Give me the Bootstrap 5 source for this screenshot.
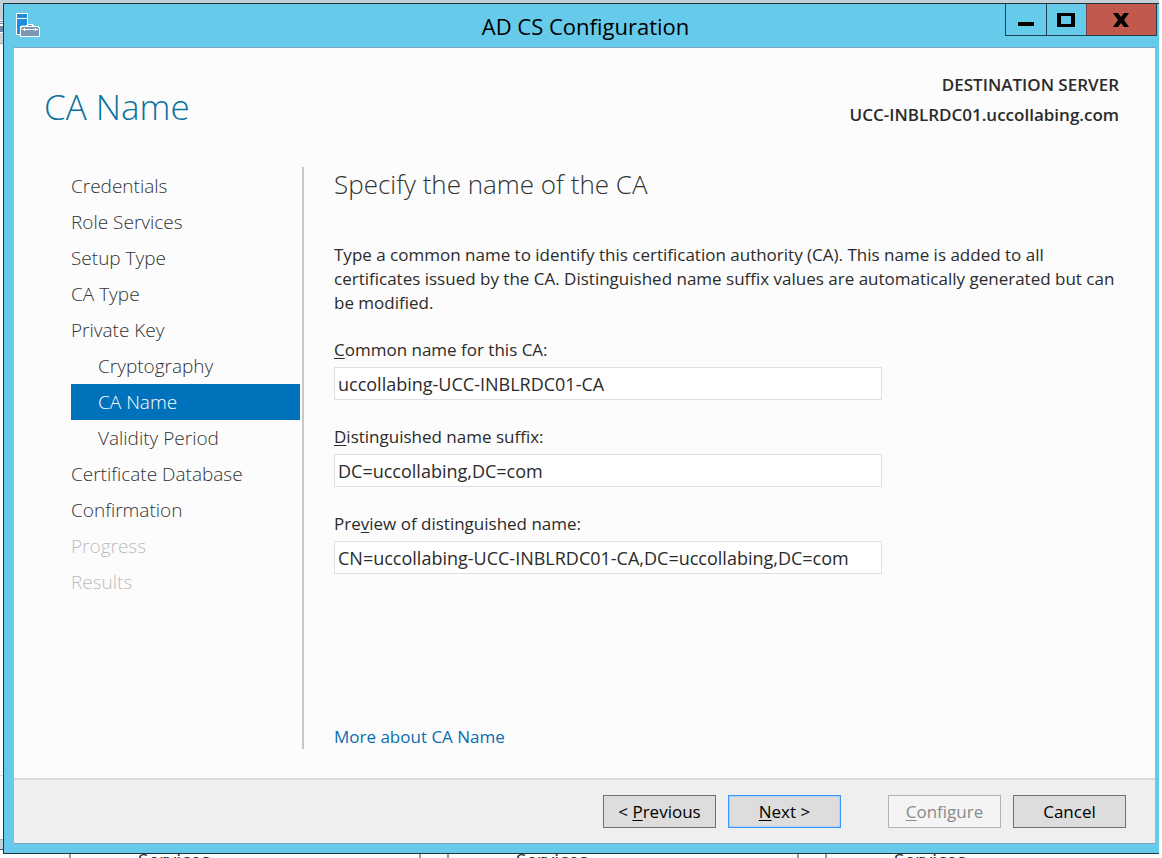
<!DOCTYPE html>
<html lang="en">
<head>
<meta charset="utf-8">
<meta name="viewport" content="width=device-width, initial-scale=1">
<title>AD CS Configuration</title>
<link href="https://cdn.jsdelivr.net/npm/bootstrap@5.3.0/dist/css/bootstrap.min.css" rel="stylesheet">
<style>
  body { font-family: "Open Sans", "Noto Sans", sans-serif; font-size: 17px; line-height: 24px; color: #2b2b2b; background: #fff; }
  .desk { background: linear-gradient(#c3d0d8 0 20px, #fff 20px 21px, #7086a4 21px 22px, #fff 22px 23px, #7086a4 23px 24px, #fff 24px 26px, #7086a4 26px 32px, #fff 32px 33px, #ccd2d6 33px 43px, #a8a8a8 43px 44px, #fcfcfc 44px 775px, #dcdcdc 775px 776px, #fcfcfc 776px 839px, #a0b0b8 839px 840px, #c0d4da 840px 849px, #506068 849px 850px, #fcfcfc 850px) 0 0 / calc(100% - 3px) 100% no-repeat; padding: 3px 3px 0; }
  .wizard { border: 1px solid #20343f; border-right: 0; background: #66caea; padding: 0 4px 9px 10px; }
  .titlebar { height: 43px; margin-right: -4px; }
  .titlebar h1 { font-size: 22px; line-height: 28px; color: #000; padding-top: 8px; }
  .app-icon { width: 24px; height: 24px; margin: 9px 0 0 2px; }
  .side { width: 152px; }
  .caption { border: 1px solid #20404c; border-top: 0; margin-right: 2px; height: 32px; }
  .caption button { border: 0; border-radius: 0; padding: 0; background: transparent; border-left: 1px solid #20404c; width: 40px; display: flex; align-items: center; justify-content: center; }
  .caption button:first-child { border-left: 0; }
  .caption button.shut { background: #c1594f; width: 70px; border-color: #7a4243; }
  .pane { background: #fcfcfc; border-top: 1px solid #7fa5bd; border-bottom: 1px solid #7fa5bd; }
  .page-head { padding: 20px 36px 0 30px; height: 119px; }
  .page-head h2 { font-size: 35px; line-height: 48px; font-weight: 300; color: #0a739e; padding-top: 15px; }
  .dest { font-weight: 600; line-height: 30px; padding-top: 2px; }
  .work { margin-bottom: 29px; }
  .steps { width: 233px; margin-left: 57px; border-right: 2px solid #c8c8c8; padding: 1px 2px 0 0; }
  .steps a { display: block; height: 36px; line-height: 36px; font-size: 19px; font-weight: 300; color: #333; text-decoration: none; }
  .steps .sub { padding-left: 27px; }
  .steps .current { background: #0072bc; color: #fff; }
  .steps .off { color: #bdbdbd; }
  .form-side { padding: 0 36px 0 30px; }
  .form-side h3 { font-size: 26px; line-height: 34px; font-weight: 300; color: #333; margin-bottom: 42px; }
  .intro { margin-bottom: 23px; }
  .field { width: 548px; max-width: 100%; margin-bottom: 25px; }
  .field label { display: block; margin-bottom: 5px; }
  .field .form-control { height: 33px; border: 1px solid #dfdfe8; border-radius: 0; padding: 0 3px; font-size: 18px; color: #2b2b2b; background: #fff; }
  .more { color: #0b6cb0; text-decoration: none; }
  .foot { background: #efefef; border-top: 2px solid #dadada; height: 65px; padding: 15px 29px 0; gap: 12px; }
  .foot .btn { width: 113px; height: 33px; border-radius: 0; padding: 0; font-size: 17px; color: #000; background: #ddd; border: 1px solid #707070; transition: none; }
  .foot .btn-next, .foot .btn-next:hover { border: 1px solid #3399ff; box-shadow: inset 0 0 0 1px #b4d2f0; margin-right: 35px; }
  .foot .btn:disabled { color: #8a8a8a; background: #f4f4f4; border-color: #b0b4b4; opacity: 1; }
  .behind { height: 4px; padding-left: 66px; gap: 26px; }
  .tile { width: 352px; flex: none; border: 2px solid #999; border-width: 0 2px; padding-left: 67px; font-size: 19px; line-height: 12px; }
  u { text-underline-offset: 2px; }
</style>
</head>
<body>
<div class="desk vh-100 d-flex flex-column overflow-hidden">
  <main class="wizard flex-grow-1 d-flex flex-column">
    <header class="titlebar d-flex justify-content-between">
      <div class="side">
        <svg class="app-icon d-block" viewBox="0 0 24 24" shape-rendering="crispEdges" aria-hidden="true">
          <path fill="#fff" d="M0 0h12v12H5v10H0z"/>
          <path fill="#1f8ddb" d="M1 1h10v4H1zM1 6h10v6H5v1H4v8H1z"/>
          <path fill="#fff" d="M11 11h6v1h1v1h5v1h1v10H4V14h1v-1h5v-1h1z"/>
          <path fill="#7b97b2" d="M12 12h4v1h-4zM6 14h16v1h1v8H5v-8h1z"/>
          <path fill="#fff" d="M6 16h16v1H6zM8 15h1v3H8zM19 15h1v3h-1z"/>
        </svg>
      </div>
      <h1 class="mb-0 fw-normal">AD CS Configuration</h1>
      <div class="caption d-flex">
        <button type="button" aria-label="Minimize"><svg width="16" height="14" viewBox="0 0 16 14"><path d="M0 9h16v4H0z"/></svg></button>
        <button type="button" aria-label="Maximize"><svg width="18" height="14" viewBox="0 0 18 14"><path fill-rule="evenodd" d="M0 0h18v14H0zM4 3v8h10V3z"/></svg></button>
        <button type="button" class="shut" aria-label="Close"><svg width="16" height="14" viewBox="0 0 16 14"><path d="M0 0h5l3 4 3-4h5l-5 7 5 7h-5l-3-4-3 4H0l5-7z"/></svg></button>
      </div>
    </header>

    <section class="pane flex-grow-1 d-flex flex-column">
      <div class="page-head d-flex justify-content-between">
        <h2 class="mb-0">CA Name</h2>
        <div class="dest text-end">DESTINATION SERVER<br>UCC-INBLRDC01.uccollabing.com</div>
      </div>

      <div class="work flex-grow-1 d-flex">
        <nav class="steps flex-shrink-0" aria-label="Steps">
          <a href="#">Credentials</a>
          <a href="#">Role Services</a>
          <a href="#">Setup Type</a>
          <a href="#">CA Type</a>
          <a href="#">Private Key</a>
          <a href="#" class="sub">Cryptography</a>
          <a href="#" class="sub current" aria-current="step">CA Name</a>
          <a href="#" class="sub">Validity Period</a>
          <a href="#">Certificate Database</a>
          <a href="#">Confirmation</a>
          <a href="#" class="off">Progress</a>
          <a href="#" class="off">Results</a>
        </nav>
        <form class="form-side flex-grow-1 d-flex flex-column">
          <h3>Specify the name of the CA</h3>
          <p class="intro">Type a common name to identify this certification authority (CA). This name is added to all certificates issued by the CA. Distinguished name suffix values are automatically generated but can be modified.</p>
          <div class="field">
            <label for="cn"><u>C</u>ommon name for this CA:</label>
            <input id="cn" class="form-control" type="text" value="uccollabing-UCC-INBLRDC01-CA">
          </div>
          <div class="field">
            <label for="dn"><u>D</u>istinguished name suffix:</label>
            <input id="dn" class="form-control" type="text" value="DC=uccollabing,DC=com">
          </div>
          <div class="field">
            <label for="preview">Pre<u>v</u>iew of distinguished name:</label>
            <input id="preview" class="form-control" type="text" readonly value="CN=uccollabing-UCC-INBLRDC01-CA,DC=uccollabing,DC=com">
          </div>
          <div class="mt-auto"><a class="more" href="#">More about CA Name</a></div>
        </form>
      </div>
      <footer class="foot d-flex justify-content-end">
        <button type="button" class="btn">&lt; <u>P</u>revious</button>
        <button type="button" class="btn btn-next"><u>N</u>ext &gt;</button>
        <button type="button" class="btn" disabled><u>C</u>onfigure</button>
        <button type="button" class="btn">Cancel</button>
      </footer>
    </section>
  </main>
  <div class="behind d-flex overflow-hidden flex-shrink-0" aria-hidden="true">
    <div class="tile">Services</div>
    <div class="tile">Services</div>
    <div class="tile">Services</div>
  </div>
</div>
<script src="https://cdn.jsdelivr.net/npm/bootstrap@5.3.0/dist/js/bootstrap.bundle.min.js"></script>
</body>
</html>
